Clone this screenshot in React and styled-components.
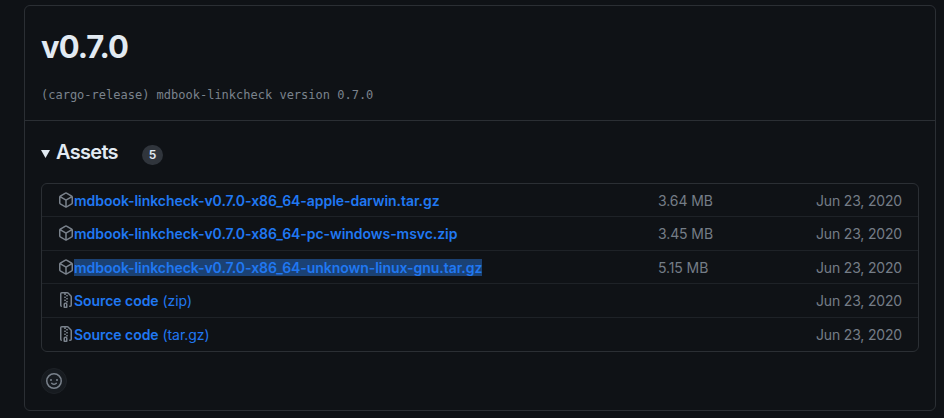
import React from "react";
import styled, { createGlobalStyle } from "styled-components";

const Global = createGlobalStyle`
  * { box-sizing: border-box; }
  body { margin: 0; background: #0f1216; }
`;

const Page = styled.main`
  height: 418px;
  padding: 5px 8px 7px 24px;
  background: #0f1216;
  color: #e2eaf2;
  font-family: Inter, "Liberation Sans", sans-serif;
  font-size: 14px;
  -webkit-font-smoothing: antialiased;
`;

const Card = styled.article`
  height: 406px;
  border: 1px solid #2b2f34;
  border-radius: 6px;
`;

const Header = styled.header`
  height: 115px;
  padding: 21px 16px 0;
  border-bottom: 1px solid #2b2f34;
`;

const Title = styled.h1`
  margin: 0;
  font-size: 31px;
  line-height: 40px;
  font-weight: 700;
  letter-spacing: -0.95px;
`;

const Message = styled.pre`
  margin: 18px 0 0;
  font: 12px/20px "DejaVu Sans Mono", monospace;
  color: #7b838d;
`;

const Body = styled.section`
  padding: 16px 16px 0;
`;

const Summary = styled.div`
  display: flex;
  align-items: center;
  height: 30px;
  margin-bottom: 16px;
`;

const Caret = styled.svg`
  width: 9px;
  height: 8px;
  margin: 4px 6px 0 0;
  fill: #e2eaf2;
`;

const Heading = styled.h2`
  margin: 0;
  width: 86px;
  font-size: 20px;
  line-height: 30px;
  font-weight: 600;
  letter-spacing: -0.7px;
`;

const Counter = styled.span`
  width: 21px;
  height: 20px;
  margin-top: 5px;
  border-radius: 10px;
  background: #30353c;
  font-size: 12px;
  line-height: 20px;
  font-weight: 600;
  text-align: center;
`;

const AssetList = styled.ul`
  display: grid;
  grid-template-rows: 33px 34px 33px 34px 33px;
  height: 169px;
  margin: 0;
  padding: 0;
  list-style: none;
  border: 1px solid #2b2f34;
  border-radius: 6px;
`;

const AssetRow = styled.li`
  display: grid;
  grid-template-columns: 16px 584px 1fr auto;
  padding: 0 16px;
  line-height: 34px;
  color: #757d87;

  &:not(:last-child) { border-bottom: 1px solid #1e2227; }
`;

const Icon = styled.svg`
  width: 16px;
  height: 16px;
  margin-top: 8px;
  fill: #7a828c;
  fill-rule: evenodd;
`;

const Link = styled.a`
  color: #2078f2;
  letter-spacing: -0.05px;
  text-decoration: none;
  white-space: nowrap;
`;

const Name = styled.span`
  display: inline-block;
  height: 17px;
  line-height: 18px;
  font-weight: 600;
  background: ${(p) => (p.$selected ? "#1b4173" : "transparent")};
`;

const Size = styled.span`
  letter-spacing: -0.1px;
`;

const ReleaseDate = styled.time`
  letter-spacing: -0.17px;
`;

const Reaction = styled.button`
  display: flex;
  align-items: center;
  justify-content: center;
  width: 26px;
  height: 26px;
  margin: 16px 0 0;
  padding: 0;
  border: 1px solid #1e2227;
  border-radius: 50%;
  background: #171b20;
`;

const ReactionIcon = styled(Icon)`
  margin: 0;
`;

const paths = {
  package:
    "M8.878.392a1.75 1.75 0 00-1.756 0l-5.25 3.045A1.75 1.75 0 001 4.951v6.098c0 .624.332 1.2.872 1.514l5.25 3.045a1.75 1.75 0 001.756 0l5.25-3.045c.54-.313.872-.89.872-1.514V4.951c0-.624-.332-1.2-.872-1.514L8.878.392zM7.875 1.69a.25.25 0 01.25 0l4.63 2.685L8 7.133 3.245 4.375l4.63-2.685zM2.5 5.677v5.372c0 .09.047.171.125.216l4.625 2.683V8.432L2.5 5.677zm6.25 8.271l4.625-2.683a.25.25 0 00.125-.216V5.677L8.75 8.432v5.516z",
  zip: "M3.5 1.75a.25.25 0 01.25-.25h3a.75.75 0 000 1.5h.5a.75.75 0 000-1.5h2.086a.25.25 0 01.177.073l2.914 2.914a.25.25 0 01.073.177v8.586a.25.25 0 01-.25.25h-.5a.75.75 0 000 1.5h.5A1.75 1.75 0 0014 13.25V4.664c0-.464-.184-.909-.513-1.237L10.573.513A1.75 1.75 0 009.336 0H3.75A1.75 1.75 0 002 1.75v11.5c0 .649.353 1.214.874 1.515a.75.75 0 10.752-1.298.25.25 0 01-.126-.217V1.75zM8.75 3a.75.75 0 000 1.5h.5a.75.75 0 000-1.5h-.5zM6 5.25a.75.75 0 01.75-.75h.5a.75.75 0 010 1.5h-.5A.75.75 0 016 5.25zm2 1.5A.75.75 0 018.75 6h.5a.75.75 0 010 1.5h-.5A.75.75 0 018 6.75zm-1.25.75a.75.75 0 000 1.5h.5a.75.75 0 000-1.5h-.5zM8 9.75A.75.75 0 018.75 9h.5a.75.75 0 010 1.5h-.5A.75.75 0 018 9.75zm-.75.75a1.75 1.75 0 00-1.75 1.75v3c0 .414.336.75.75.75h2.5a.75.75 0 00.75-.75v-3a1.75 1.75 0 00-1.75-1.75h-.5zM7 12.25a.25.25 0 01.25-.25h.5a.25.25 0 01.25.25v2.25H7v-2.25z",
  smiley:
    "M1.5 8a6.5 6.5 0 1113 0 6.5 6.5 0 01-13 0zM8 0a8 8 0 100 16A8 8 0 008 0zM5 8a1 1 0 100-2 1 1 0 000 2zm7-1a1 1 0 11-2 0 1 1 0 012 0zM5.32 9.636a.75.75 0 011.038.175l.007.009c.103.118.22.222.35.31.264.178.683.37 1.285.37.602 0 1.02-.192 1.285-.371.13-.088.247-.192.35-.31l.007-.008a.75.75 0 111.222.87c-.2.26-.43.49-.733.687-.63.418-1.37.638-2.131.629-.946 0-1.652-.308-2.126-.63a3.32 3.32 0 01-.715-.657.75.75 0 01.161-1.072z",
};

const assets = [
  { icon: "package", name: "mdbook-linkcheck-v0.7.0-x86_64-apple-darwin.tar.gz", size: "3.64 MB" },
  { icon: "package", name: "mdbook-linkcheck-v0.7.0-x86_64-pc-windows-msvc.zip", size: "3.45 MB" },
  { icon: "package", name: "mdbook-linkcheck-v0.7.0-x86_64-unknown-linux-gnu.tar.gz", size: "5.15 MB", selected: true },
  { icon: "zip", name: "Source code", format: "(zip)" },
  { icon: "zip", name: "Source code", format: "(tar.gz)" },
];

export default function App() {
  return (
    <Page>
      <Global />
      <Card>
        <Header>
          <Title>v0.7.0</Title>
          <Message>(cargo-release) mdbook-linkcheck version 0.7.0</Message>
        </Header>
        <Body>
          <Summary>
            <Caret viewBox="0 0 9 8"><path d="M0 0h9L4.5 8z" /></Caret>
            <Heading>Assets</Heading>
            <Counter>5</Counter>
          </Summary>
          <AssetList>
            {assets.map((a) => (
              <AssetRow key={a.name + (a.format || "")}>
                <Icon viewBox="0 0 16 16"><path d={paths[a.icon]} /></Icon>
                <Link href="#">
                  <Name $selected={a.selected}>{a.name}</Name>
                  {a.format && ` ${a.format}`}
                </Link>
                <Size>{a.size}</Size>
                <ReleaseDate>Jun 23, 2020</ReleaseDate>
              </AssetRow>
            ))}
          </AssetList>
          <Reaction aria-label="Add reaction">
            <ReactionIcon viewBox="0 0 16 16"><path d={paths.smiley} /></ReactionIcon>
          </Reaction>
        </Body>
      </Card>
    </Page>
  );
}
